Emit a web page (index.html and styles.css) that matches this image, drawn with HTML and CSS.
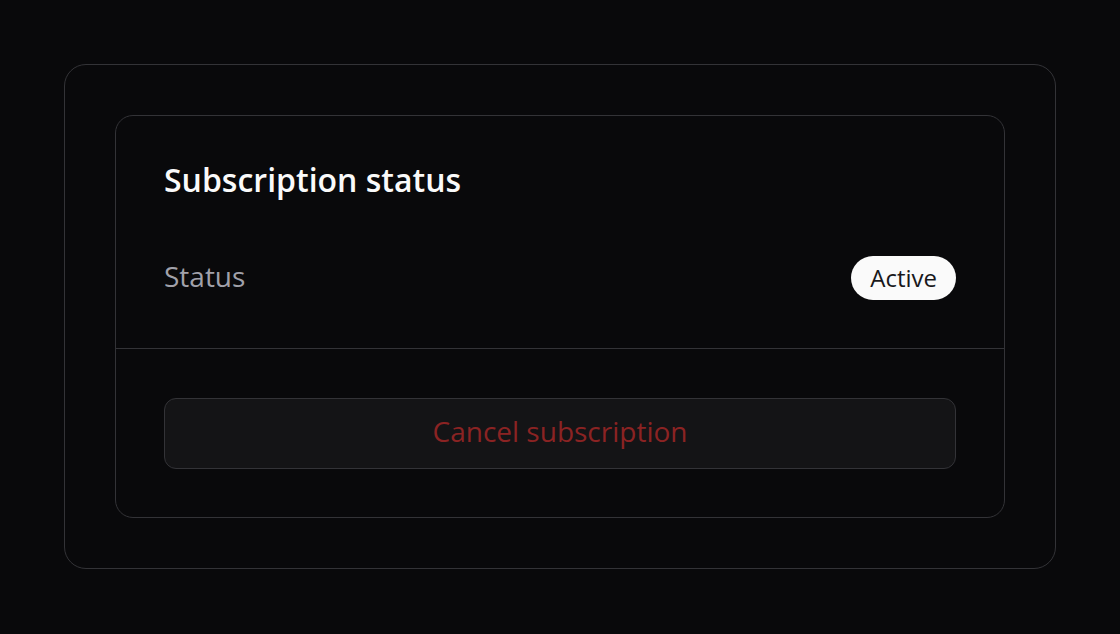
FILE: index.html
```html
<!DOCTYPE html>
<html lang="en">
<head>
<meta charset="utf-8">
<title>Subscription status</title>
<link rel="stylesheet" href="styles.css">
</head>
<body>
  <div class="shell">
    <section class="card">
      <div class="card-header">
        <h2 class="card-title">Subscription status</h2>
        <div class="status-row">
          <span class="status-label">Status</span>
          <span class="badge">Active</span>
        </div>
      </div>
      <div class="card-footer">
        <button class="cancel-btn" type="button">Cancel subscription</button>
      </div>
    </section>
  </div>
</body>
</html>
```

FILE: styles.css
```css
* { box-sizing: border-box; }
html, body { height: 100%; }
body {
  margin: 0;
  padding: 64px;
  background: #09090b;
  font-family: "Open Sans", "Noto Sans", sans-serif;
  color: #fafafa;
}
.shell {
  border: 1px solid #333337;
  border-radius: 22px;
  padding: 50px;
}
.card {
  border: 1px solid #333337;
  border-radius: 18px;
  background: #09090b;
}
.card-header {
  padding: 48px;
  display: flex;
  flex-direction: column;
  gap: 60px;
}
.card-title {
  margin: 0;
  font-size: 32px;
  font-weight: 600;
  line-height: 32px;
  color: #fafafa;
}
.status-row {
  display: flex;
  align-items: center;
  justify-content: space-between;
}
.status-label {
  font-size: 28px;
  color: #a1a1aa;
  padding-bottom: 4px;
}
.badge {
  background: #fafafa;
  color: #18181b;
  font-size: 24px;
  font-weight: 500;
  line-height: 30px;
  padding: 7px 19px;
  border-radius: 999px;
}
.card-footer {
  border-top: 1px solid #333337;
  padding: 49px 48px 48px;
}
.cancel-btn {
  display: block;
  width: 100%;
  height: 71px;
  padding: 0 0 5px;
  background: #141416;
  border: 1px solid #333337;
  border-radius: 12px;
  color: #8b2323;
  font-family: inherit;
  font-size: 28px;
}
```
